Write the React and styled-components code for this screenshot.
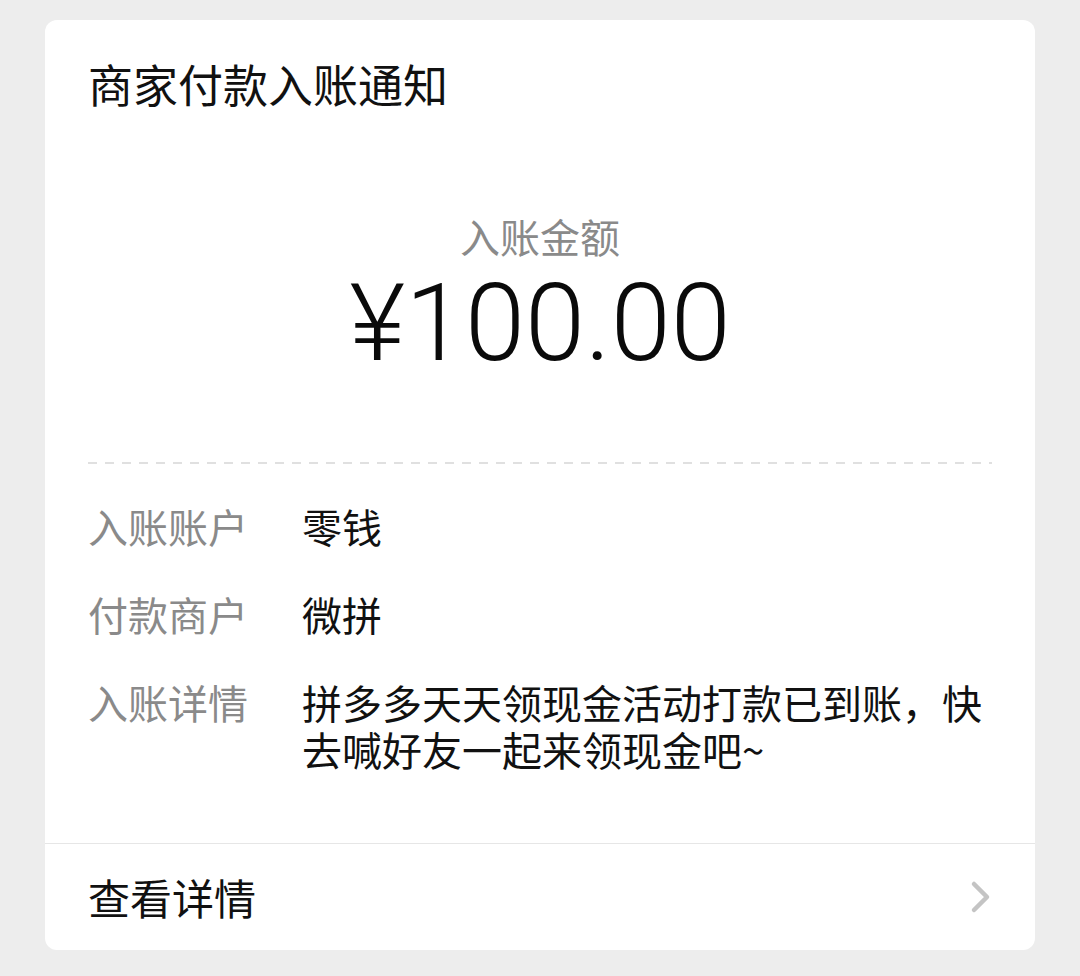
import React from "react";
import styled, { createGlobalStyle } from "styled-components";

const Global = createGlobalStyle`
  html, body { margin: 0; padding: 0; background: #ededed; }
  body { font-family: "Noto Sans CJK SC", "Noto Sans", sans-serif; }
`;

const Page = styled.div`
  width: 1080px;
  height: 976px;
  box-sizing: border-box;
  padding: 20px 45px 0 45px;
  background: #ededed;
`;

const Card = styled.div`
  width: 990px;
  background: #ffffff;
  border-radius: 12px;
  overflow: hidden;
`;

const Body = styled.div`
  padding: 34px 43px 70px 43px;
`;

const Title = styled.div`
  font-size: 45px;
  line-height: 60px;
  color: #111111;
`;

const AmountBlock = styled.div`
  display: flex;
  flex-direction: column;
  align-items: center;
  margin-top: 97px;
`;

const AmountLabel = styled.div`
  font-size: 40px;
  line-height: 50px;
  color: #8a8a8a;
`;

const Amount = styled.div`
  margin-top: 2px;
  font-family: "Roboto", "Liberation Sans", sans-serif;
  font-weight: 300;
  font-size: 108px;
  line-height: 120px;
  color: #0a0a0a;
`;

const Dashed = styled.div`
  margin-top: 79px;
  height: 2px;
  background-image: repeating-linear-gradient(
    to right,
    #e0e0e0 0 9px,
    transparent 9px 17px
  );
`;

const Rows = styled.div`
  display: flex;
  flex-direction: column;
  gap: 41px;
  margin-top: 39px;
`;

const Row = styled.div`
  display: flex;
  align-items: flex-start;
`;

const Label = styled.div`
  flex: 0 0 214px;
  font-size: 40px;
  line-height: 47px;
  color: #8a8a8a;
`;

const Value = styled.div`
  flex: 1 1 auto;
  font-size: 40px;
  line-height: 47px;
  color: #111111;
`;

const Footer = styled.div`
  display: flex;
  align-items: center;
  justify-content: space-between;
  height: 106px;
  padding: 0 43px;
  border-top: 1px solid #e6e6e6;
`;

const FooterText = styled.div`
  font-size: 42px;
  line-height: 50px;
  color: #111111;
`;

const Chevron = () => (
  <svg width="22" height="34" viewBox="0 0 22 34" fill="none">
    <polyline
      points="4,4 17,17 4,30"
      stroke="#c4c4c4"
      strokeWidth="4.5"
      strokeLinecap="round"
      strokeLinejoin="round"
    />
  </svg>
);

const rows = [
  { label: "入账账户", value: "零钱" },
  { label: "付款商户", value: "微拼" },
  {
    label: "入账详情",
    value: "拼多多天天领现金活动打款已到账，快去喊好友一起来领现金吧~",
  },
];

export default function App() {
  return (
    <>
      <Global />
      <Page>
        <Card>
          <Body>
            <Title>商家付款入账通知</Title>
            <AmountBlock>
              <AmountLabel>入账金额</AmountLabel>
              <Amount>¥100.00</Amount>
            </AmountBlock>
            <Dashed />
            <Rows>
              {rows.map((r) => (
                <Row key={r.label}>
                  <Label>{r.label}</Label>
                  <Value>{r.value}</Value>
                </Row>
              ))}
            </Rows>
          </Body>
          <Footer>
            <FooterText>查看详情</FooterText>
            <Chevron />
          </Footer>
        </Card>
      </Page>
    </>
  );
}
